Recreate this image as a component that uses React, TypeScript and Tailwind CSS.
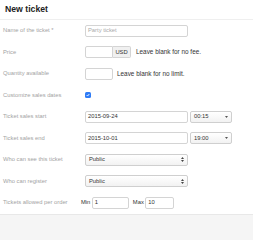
import React from 'react';

const font = { fontFamily: '"Liberation Sans", Arial, sans-serif' };

function Row({ label, children }: { label: string; children?: React.ReactNode }) {
  return (
    <div className="flex h-[21.5px] items-center px-[3px]">
      <div className="w-[82px] shrink-0 text-[5.8px] text-[#a3a3a3]">{label}</div>
      <div className="flex items-center">{children}</div>
    </div>
  );
}

function UpDown() {
  return (
    <svg width="3" height="5" viewBox="0 0 3 5" className="fill-[#444]">
      <path d="M1.5 0 L3 2 H0 Z" />
      <path d="M0 3 H3 L1.5 5 Z" />
    </svg>
  );
}

function Caret() {
  return (
    <svg width="3" height="2" viewBox="0 0 3 2" className="fill-[#555]">
      <path d="M0 0 H3 L1.5 2 Z" />
    </svg>
  );
}

const input = 'h-[12px] rounded-[2px] border border-[#d4d4d4] bg-white px-[2px] flex items-center text-[5.8px] text-[#333]';
const select = 'h-[12px] rounded-[2px] border border-[#cfcfcf] bg-gradient-to-b from-white to-[#f2f2f2] px-[3px] flex items-center justify-between text-[5.8px] text-[#333]';

export default function App() {
  return (
    <div className="flex h-[240px] w-[253px] flex-col bg-white" style={font}>
      <div className="flex h-[20px] shrink-0 items-center border-b border-[#efefef] px-[5px]">
        <h1 className="text-[8.7px] font-bold text-[#222]">New ticket</h1>
      </div>

      <Row label="Name of the ticket *">
        <div className={`${input} w-[103px] text-[#aaa]`}>Party ticket</div>
      </Row>

      <Row label="Price">
        <div className={`${input} w-[28px] rounded-r-none`}></div>
        <div className="flex h-[12px] w-[18px] items-center justify-center rounded-r-[2px] border border-l-0 border-[#d4d4d4] bg-[#f0f0f0] text-[5.8px] text-[#333]">USD</div>
        <span className="ml-[5px] text-[6.4px] text-[#333]">Leave blank for no fee.</span>
      </Row>

      <Row label="Quantity available">
        <div className={`${input} w-[28px]`}></div>
        <span className="ml-[4px] text-[6.4px] text-[#333]">Leave blank for no limit.</span>
      </Row>

      <Row label="Customize sales dates">
        <div className="flex h-[6px] w-[6px] items-center justify-center rounded-[1.5px] bg-[#2f7cf6]">
          <svg width="4" height="4" viewBox="0 0 4 4" fill="none" stroke="white" strokeWidth="0.9">
            <path d="M0.7 2.1 L1.6 3 L3.3 1" />
          </svg>
        </div>
      </Row>

      <Row label="Ticket sales start">
        <div className={`${input} w-[103px]`}>2015-09-24</div>
        <div className={`${select} ml-[2px] w-[42px]`}>
          <span>00:15</span>
          <Caret />
        </div>
      </Row>

      <Row label="Ticket sales end">
        <div className={`${input} w-[103px]`}>2015-10-01</div>
        <div className={`${select} ml-[2px] w-[42px]`}>
          <span>19:00</span>
          <Caret />
        </div>
      </Row>

      <Row label="Who can see this ticket">
        <div className={`${select} w-[103px]`}>
          <span>Public</span>
          <UpDown />
        </div>
      </Row>

      <Row label="Who can register">
        <div className={`${select} w-[103px]`}>
          <span>Public</span>
          <UpDown />
        </div>
      </Row>

      <div className="flex h-[21.5px] items-center px-[3px]">
        <div className="w-[78px] shrink-0 text-[5.8px] text-[#a3a3a3]">Tickets allowed per order</div>
        <span className="text-[5.8px] text-[#333]">Min</span>
        <div className={`${input} ml-[1.5px] w-[37px]`}>1</div>
        <span className="ml-[4px] text-[5.8px] text-[#333]">Max</span>
        <div className={`${input} ml-[1.5px] w-[29px]`}>10</div>
      </div>

      <div className="flex-1 border-t border-[#e8e8e8] bg-[#f5f5f5]"></div>
    </div>
  );
}
